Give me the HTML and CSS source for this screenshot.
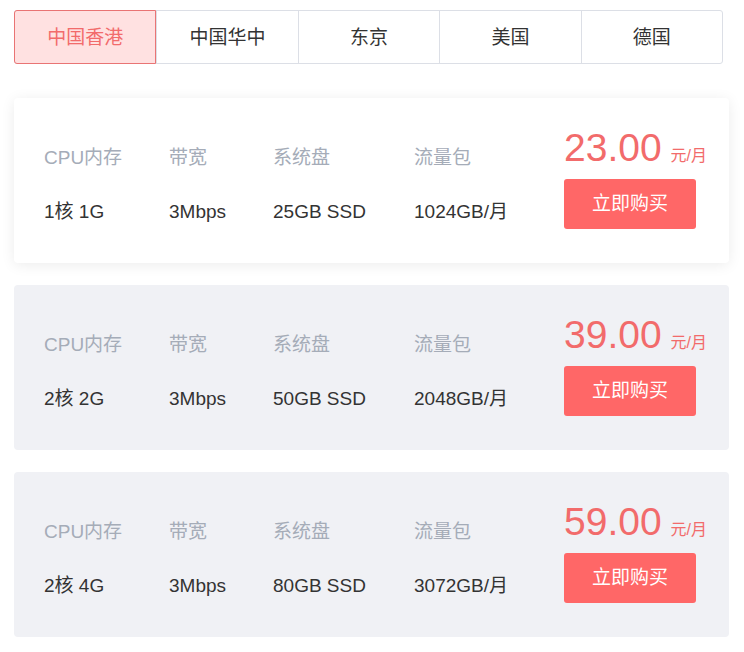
FILE: index.html
```html
<!DOCTYPE html>
<html lang="zh-CN">
<head>
    <meta charset="UTF-8">
    <meta name="viewport" content="width=device-width, initial-scale=1.0">
    <title>套餐价格</title>
    <link rel="stylesheet" href="styles.css">
</head>
<body>
    <div class="page">
        <ul class="tabs">
            <li class="active">中国香港</li>
            <li>中国华中</li>
            <li>东京</li>
            <li>美国</li>
            <li>德国</li>
        </ul>

        <div class="plan featured">
            <div class="specs">
                <span class="label">CPU内存</span>
                <span class="label">带宽</span>
                <span class="label">系统盘</span>
                <span class="label">流量包</span>
                <span class="value">1核 1G</span>
                <span class="value">3Mbps</span>
                <span class="value">25GB SSD</span>
                <span class="value">1024GB/月</span>
            </div>
            <div class="buy">
                <p class="price">23.00<small>元/月</small></p>
                <a href="#" class="btn">立即购买</a>
            </div>
        </div>

        <div class="plan">
            <div class="specs">
                <span class="label">CPU内存</span>
                <span class="label">带宽</span>
                <span class="label">系统盘</span>
                <span class="label">流量包</span>
                <span class="value">2核 2G</span>
                <span class="value">3Mbps</span>
                <span class="value">50GB SSD</span>
                <span class="value">2048GB/月</span>
            </div>
            <div class="buy">
                <p class="price">39.00<small>元/月</small></p>
                <a href="#" class="btn">立即购买</a>
            </div>
        </div>

        <div class="plan">
            <div class="specs">
                <span class="label">CPU内存</span>
                <span class="label">带宽</span>
                <span class="label">系统盘</span>
                <span class="label">流量包</span>
                <span class="value">2核 4G</span>
                <span class="value">3Mbps</span>
                <span class="value">80GB SSD</span>
                <span class="value">3072GB/月</span>
            </div>
            <div class="buy">
                <p class="price">59.00<small>元/月</small></p>
                <a href="#" class="btn">立即购买</a>
            </div>
        </div>
    </div>
</body>
</html>
```

FILE: styles.css
```css
*{
    margin: 0;
    padding: 0;
    box-sizing: border-box;
    text-decoration: none;
    list-style: none;
}

body{
    background-color: #fff;
    font-family: "Liberation Sans", "Noto Sans CJK SC", sans-serif;
    color: #333;
}

.page{
    padding: 10px 14px;
    width: 743px;
}

.tabs{
    display: flex;
    width: 709px;
    height: 54px;
    border: 1px solid #dcdfe6;
    border-radius: 3px;
    margin-bottom: 34px;
}

.tabs li{
    flex: 1;
    display: flex;
    align-items: center;
    justify-content: center;
    padding-bottom: 4px;
    font-size: 19px;
    color: #333;
    border-left: 1px solid #dcdfe6;
}
.tabs li:first-child{
    border-left: none;
}
.tabs li.active{
    background-color: #ffe1e1;
    color: #f26b6b;
    margin: -1px 0 -1px -1px;
    border: 1px solid #e97474;
    border-radius: 3px 0 0 3px;
}

.plan{
    display: flex;
    align-items: center;
    justify-content: space-between;
    height: 165px;
    padding: 0 33px 0 30px;
    margin-bottom: 22px;
    background-color: #f0f1f5;
    border-radius: 4px;
}
.plan.featured{
    background-color: #fff;
    box-shadow: 0 2px 14px rgba(0, 0, 0, 0.08);
}

.specs{
    display: grid;
    grid-template-columns: 125px 104px 141px 150px;
    row-gap: 26px;
    margin-top: 8px;
    font-size: 19px;
    line-height: 28px;
}
.label{
    color: #a5acb8;
}
.value{
    color: #333;
}

.buy{
    display: flex;
    flex-direction: column;
    align-items: flex-start;
    margin-bottom: 4px;
}
.price{
    font-size: 39px;
    line-height: 40px;
    color: #f26b6b;
    white-space: nowrap;
}
.price small{
    font-size: 16px;
    margin-left: 9px;
}
.btn{
    display: block;
    width: 132px;
    height: 50px;
    margin-top: 3px;
    line-height: 50px;
    text-align: center;
    font-size: 19px;
    color: #fff;
    background-color: #ff6767;
    border-radius: 3px;
}
```
